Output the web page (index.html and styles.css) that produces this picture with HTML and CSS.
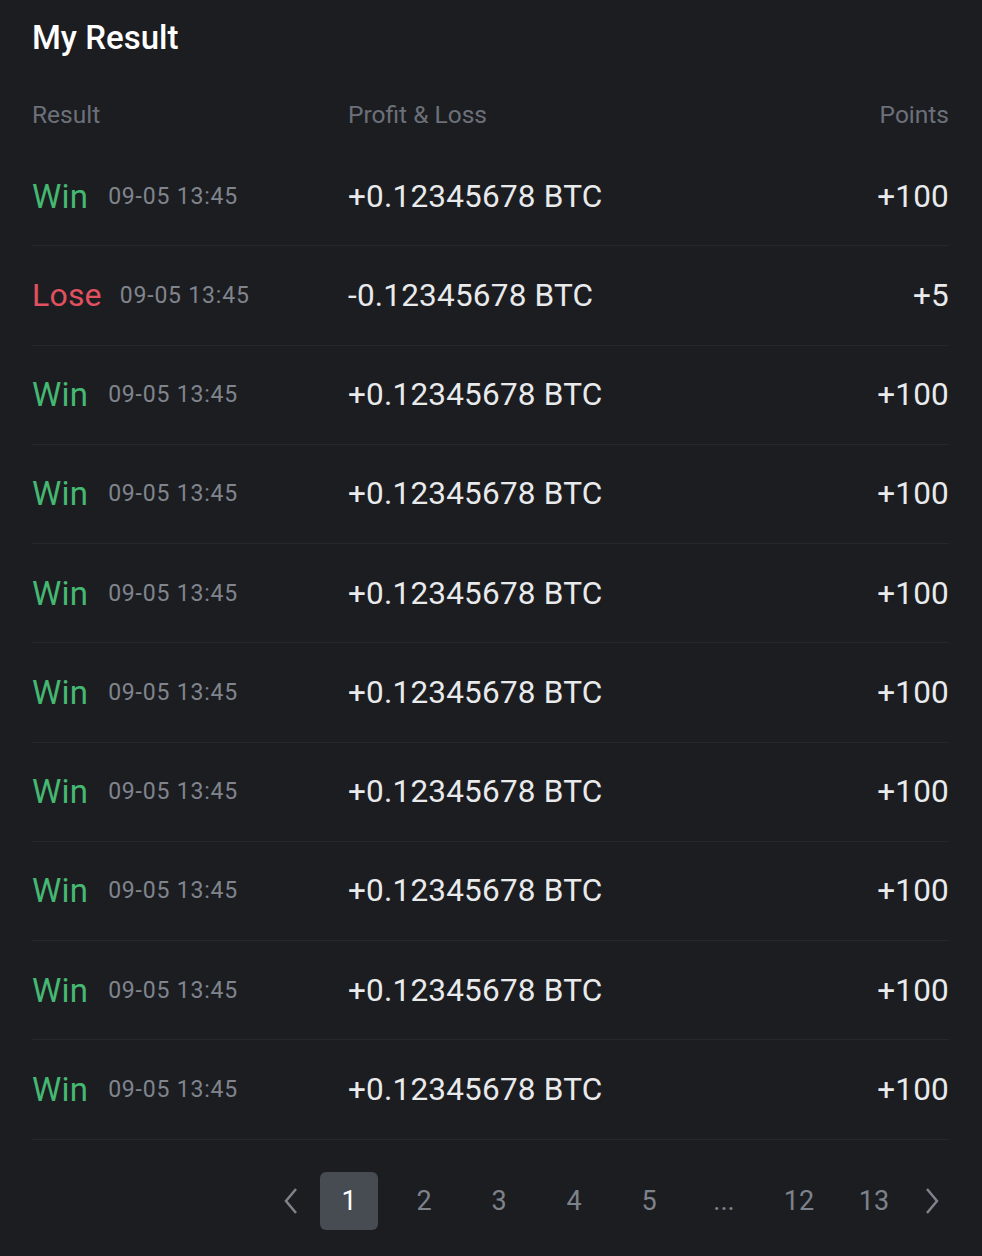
FILE: index.html
```html
<!DOCTYPE html>
<html>
<head>
<meta charset="utf-8">
<link rel="stylesheet" href="styles.css">
</head>
<body>
<div class="panel">
  <h1 class="title">My Result</h1>
  <div class="row head">
    <div class="c1">Result</div>
    <div class="c2">Profit &amp; Loss</div>
    <div class="c3">Points</div>
  </div>
  <div class="list">
    <div class="row item"><div class="c1"><span class="win">Win</span><span class="date">09-05 13:45</span></div><div class="c2">+0.12345678 BTC</div><div class="c3">+100</div></div>
    <div class="row item"><div class="c1"><span class="lose">Lose</span><span class="date">09-05 13:45</span></div><div class="c2">-0.12345678 BTC</div><div class="c3">+5</div></div>
    <div class="row item"><div class="c1"><span class="win">Win</span><span class="date">09-05 13:45</span></div><div class="c2">+0.12345678 BTC</div><div class="c3">+100</div></div>
    <div class="row item"><div class="c1"><span class="win">Win</span><span class="date">09-05 13:45</span></div><div class="c2">+0.12345678 BTC</div><div class="c3">+100</div></div>
    <div class="row item"><div class="c1"><span class="win">Win</span><span class="date">09-05 13:45</span></div><div class="c2">+0.12345678 BTC</div><div class="c3">+100</div></div>
    <div class="row item"><div class="c1"><span class="win">Win</span><span class="date">09-05 13:45</span></div><div class="c2">+0.12345678 BTC</div><div class="c3">+100</div></div>
    <div class="row item"><div class="c1"><span class="win">Win</span><span class="date">09-05 13:45</span></div><div class="c2">+0.12345678 BTC</div><div class="c3">+100</div></div>
    <div class="row item"><div class="c1"><span class="win">Win</span><span class="date">09-05 13:45</span></div><div class="c2">+0.12345678 BTC</div><div class="c3">+100</div></div>
    <div class="row item"><div class="c1"><span class="win">Win</span><span class="date">09-05 13:45</span></div><div class="c2">+0.12345678 BTC</div><div class="c3">+100</div></div>
    <div class="row item"><div class="c1"><span class="win">Win</span><span class="date">09-05 13:45</span></div><div class="c2">+0.12345678 BTC</div><div class="c3">+100</div></div>
  </div>
  <div class="pager">
    <span class="arrow"><svg width="18" height="28" viewBox="0 0 18 28"><path d="M14 2 L4 14 L14 26" fill="none" stroke="#7d828b" stroke-width="2.5"/></svg></span>
    <span class="page active">1</span>
    <span class="page">2</span>
    <span class="page">3</span>
    <span class="page">4</span>
    <span class="page">5</span>
    <span class="page dots">...</span>
    <span class="page">12</span>
    <span class="page">13</span>
    <span class="arrow"><svg width="18" height="28" viewBox="0 0 18 28"><path d="M4 2 L14 14 L4 26" fill="none" stroke="#7d828b" stroke-width="2.5"/></svg></span>
  </div>
</div>
</body>
</html>
```

FILE: styles.css
```css
html, body {
  margin: 0;
  padding: 0;
  background: #1c1d21;
}
body {
  font-family: Roboto, "Liberation Sans", sans-serif;
  width: 982px;
  height: 1256px;
  overflow: hidden;
}
.panel {
  padding: 18px 33px 0 32px;
}
.title {
  margin: 0;
  font-size: 33px;
  font-weight: 500;
  color: #ffffff;
  line-height: 40px;
  height: 40px;
}
.row {
  display: flex;
  align-items: center;
}
.c1 { width: 316px; display: flex; align-items: center; }
.c2 { flex: 1; }
.c3 { text-align: right; }
.head {
  margin-top: 40px;
  height: 32px;
  font-size: 24.5px;
  color: #6c7079;
}
.list {
  margin-top: 17px;
}
.item {
  height: 98.25px;
  border-bottom: 1px solid #25272c;
  color: #e9eaec;
  font-size: 31.5px;
  letter-spacing: 0.2px;
}
.win { color: #45b872; font-size: 33px; }
.lose { color: #e2515f; font-size: 32px; }
.date {
  margin-left: 20px;
  font-size: 23px;
  color: #80848d;
  letter-spacing: 0.8px;
}
.lose + .date { margin-left: 18px; }
.pager {
  display: flex;
  align-items: center;
  justify-content: flex-end;
  margin-top: 32px;
  padding-right: 5px;
  height: 58px;
  gap: 17px;
  font-size: 27px;
  color: #7d828b;
}
.arrow { display: flex; align-items: center; width: 24px; justify-content: center; }
.page {
  width: 58px;
  height: 58px;
  display: flex;
  align-items: center;
  justify-content: center;
  border-radius: 6px;
}
.page.active {
  background: #474b52;
  color: #ffffff;
}
```
